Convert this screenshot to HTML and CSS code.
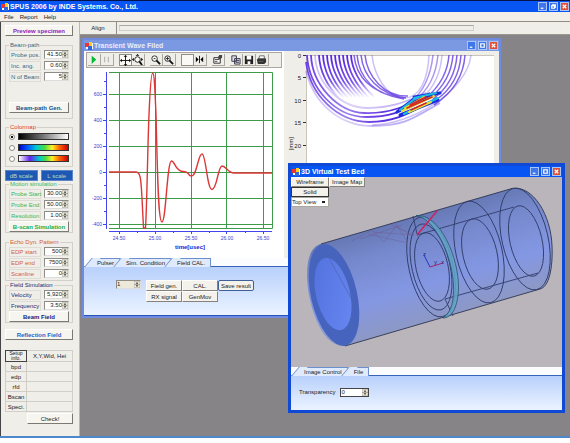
FILE: index.html
```html
<!DOCTYPE html>
<html lang="en">
<head>
<meta charset="utf-8">
<title>SPUS 2006 by INDE Systems. Co., Ltd.</title>
<link rel="stylesheet" href="styles.css">
</head>
<body>
<svg class="defs" aria-hidden="true">
  <symbol id="spin" viewBox="0 0 7 8"><path d="M0 0h7v4H0zM0 4h7v4H0z" fill="#ece9d8" stroke="#aaa69a"/><path d="M2 3h3L3.500 1zM2 5h3L3.500 7z" fill="#333"/></symbol>
  <symbol id="logo" viewBox="0 0 8 8"><path fill="#fff" d="M1 1h7v6H1z"/><path fill="#e33" d="M0 1h4v4H0z"/><path fill="#fc2" d="M4 0h3v4H4z"/><path fill="#36d" d="M3 4h4v4H3z"/></symbol>
</svg>
<header class="titlebar app-title"><svg class="logo"><use href="#logo"/></svg><h1>SPUS 2006 by INDE Systems. Co., Ltd.</h1>
  <div class="caption"><button aria-label="Minimize"><svg viewBox="0 0 8 8"><path d="M2 6h3"/></svg></button><button aria-label="Restore"><svg viewBox="0 0 8 8"><path d="M3 3V2h3v3H5M2 3h3v3H2z"/></svg></button><button class="close" aria-label="Close"><svg viewBox="0 0 8 8"><path d="M2 2l4 4M6 2L2 6"/></svg></button></div>
</header>
<nav class="menu"><button>File</button><button>Report</button><button>Help</button></nav>
<main class="app">
<aside class="side">
  <button class="btn purple wide">Preview specimen</button>
  <fieldset class="g-beam teal"><legend>Beam-path</legend>
    <div class="row"><label for="a1">Probe pos.</label><span class="num"><input id="a1" value="41.50"><svg><use href="#spin"/></svg></span></div>
    <div class="row"><label for="a2">Inc. ang.</label><span class="num"><input id="a2" value="0.60"><svg><use href="#spin"/></svg></span></div>
    <div class="row"><label for="a3">N of Beam</label><span class="num"><input id="a3" value="5"><svg><use href="#spin"/></svg></span></div>
    <button class="btn navy push">Beam-path Gen.</button>
  </fieldset>
  <fieldset class="g-color red"><legend>Colormap</legend>
    <label class="map"><input type="radio" name="map" checked aria-label="Gray"><span class="bar gray"></span></label>
    <label class="map"><input type="radio" name="map" aria-label="Rainbow"><span class="bar rain"></span></label>
    <label class="map"><input type="radio" name="map" aria-label="White rainbow"><span class="bar wrain"></span></label>
  </fieldset>
  <div class="scales"><button>dB scale</button><button>L scale</button></div>
  <fieldset class="green"><legend>Motion simulation</legend>
    <div class="row"><label for="b1">Probe Start</label><span class="num"><input id="b1" value="30.00"><svg><use href="#spin"/></svg></span></div>
    <div class="row"><label for="b2">Probe End</label><span class="num"><input id="b2" value="50.00"><svg><use href="#spin"/></svg></span></div>
    <div class="row"><label for="b3">Resolution</label><span class="num"><input id="b3" value="1.00"><svg><use href="#spin"/></svg></span></div>
    <button class="btn lime">B-scan Simulation</button>
  </fieldset>
  <fieldset class="g-echo orange"><legend>Echo Dyn. Pattern</legend>
    <div class="row"><label for="c1">EDP start</label><span class="num"><input id="c1" value="500"><svg><use href="#spin"/></svg></span></div>
    <div class="row"><label for="c2">EDP end</label><span class="num"><input id="c2" value="7500"><svg><use href="#spin"/></svg></span></div>
    <div class="row"><label for="c3">Scanline</label><span class="num"><input id="c3" value="0"><svg><use href="#spin"/></svg></span></div>
  </fieldset>
  <fieldset class="indigo"><legend>Field Simulation</legend>
    <div class="row"><label for="d1">Velocity</label><span class="num"><input id="d1" value="5,920"><svg><use href="#spin"/></svg></span></div>
    <div class="row"><label for="d2">Frequency</label><span class="num"><input id="d2" value="3.50"><svg><use href="#spin"/></svg></span></div>
    <button class="btn dark">Beam Field</button>
  </fieldset>
  <button class="btn blue reflect">Reflection Field</button>
  <table class="info">
    <tr><th class="setup">Setup<br>info.</th><td>X,Y,Wid, Hei</td></tr>
    <tr><th>bpd</th><td></td></tr><tr><th>edp</th><td></td></tr><tr><th>rfd</th><td></td></tr><tr><th>Bscan</th><td></td></tr><tr><th>Speci.</th><td></td></tr>
  </table>
  <button class="btn check">Check!</button>
</aside>
<section class="work">
  <div class="align"><button>Align</button><span class="slot"></span></div>
  <div class="desk">
    <section class="window wave">
      <header class="titlebar"><svg class="logo"><use href="#logo"/></svg><h2>Transient Wave Filed</h2>
        <div class="caption"><button aria-label="Minimize"><svg viewBox="0 0 8 8"><path d="M2 6h3"/></svg></button><button aria-label="Maximize"><svg viewBox="0 0 8 8"><path d="M2 2h4v4H2z"/></svg></button><button class="close" aria-label="Close"><svg viewBox="0 0 8 8"><path d="M2 2l4 4M6 2L2 6"/></svg></button></div></header>
      <div class="plots">
        <div class="left">
          <div class="tools">
            <button aria-label="Play"><svg viewBox="0 0 12 12"><path d="M4 2l5 4-5 5z" fill="#0b3"/></svg></button>
            <button aria-label="Pause"><svg viewBox="0 0 12 12"><path d="M4 3v6M8 3v6" stroke="#aaa"/></svg></button><i></i>
            <button class="on" aria-label="Move"><svg viewBox="0 0 12 12"><path d="M6 1v10M1 6h10" stroke="#111"/><path d="M6 0l2 2H4zM6 12l2-2H4zM0 6l2-2v4zM12 6l-2-2v4z"/></svg></button>
            <button aria-label="Pan zoom"><svg viewBox="0 0 12 12"><circle cx="6" cy="6" r="3" fill="#fff" stroke="#222"/><path d="M6 0l2 2H4zM0 6l2-2v4zM12 6l-2-2v4z"/><path d="M8 8l3 4" stroke="#111" stroke-width="2"/></svg></button><i></i>
            <button aria-label="Zoom out"><svg viewBox="0 0 12 12"><circle cx="5" cy="5" r="3" fill="#fff" stroke="#222"/><path d="M4 5h2" stroke="#222"/><path d="M7 7l4 4" stroke="#111" stroke-width="2"/></svg></button>
            <button aria-label="Zoom in"><svg viewBox="0 0 12 12"><circle cx="5" cy="5" r="3" fill="#fff" stroke="#222"/><path d="M3 5h4M5 3v4" stroke="#222"/><path d="M7 7l4 4" stroke="#111" stroke-width="2"/></svg></button><i></i>
            <button class="on" aria-label="Blank"></button>
            <button aria-label="Cursors"><svg viewBox="0 0 12 12"><path d="M6 2v8" stroke="#111"/><path d="M5 6L2 3v6zM7 6l3-3v6z"/></svg></button><i></i>
            <button aria-label="Properties"><svg viewBox="0 0 12 12"><path d="M2 4h7v6H2z" fill="#fff" stroke="#222"/><path d="M3 6h5M3 8h3" stroke="#444"/><path d="M6 4l2-3h3v3L8 6z" fill="#444"/></svg></button><i></i>
            <button aria-label="Copy"><svg viewBox="0 0 12 12"><path d="M2 2h5v6H2zM5 5h6v6H5z" fill="#dde" stroke="#334"/><path d="M6 7h4M6 9h4" stroke="#334"/></svg></button>
            <button aria-label="Save"><svg viewBox="0 0 12 12"><path d="M2 2h9v9H2z" fill="#222"/><path d="M4 2h5v4H4zM5 8h3v3H5z" fill="#fff"/></svg></button>
            <button aria-label="Print"><svg viewBox="0 0 12 12"><path d="M1 6l2-2h7l1 2v3l-2 2H2z" fill="#333"/><path d="M4 2h5v3H3zM3 8h5" fill="#fff" stroke="#666"/></svg></button>
          </div>
          <svg class="chart" viewBox="87 68 189 190">
            <path d="M110 72.500H273.500V228.500H110M110 94.500H273M110 120.500H273M110 146.500H273M110 172.500H273M110 198.500H273M110 224.500H273M120.500 72V228M156.500 72V228M192.500 72V228M227.500 72V228M264.500 72V228" fill="none" stroke="#3d9c4c"/>
            <path d="M107.500 72V229M104 94.500h3M104 120.500h3M104 146.500h3M104 172.500h3M104 198.500h3M104 224.500h3M105 81.500h2M105 107.500h2M105 133.500h2M105 159.500h2M105 185.500h2M105 211.500h2M110 231.500H273M120.500 231v3M156.500 231v3M192.500 231v3M227.500 231v3M264.500 231v3M138.500 231v2M174.500 231v2M210.500 231v2M246.500 231v2" fill="none" stroke="#4444ee"/>
            <g class="axis" text-anchor="end"><text x="103" y="96">600</text><text x="103" y="122">400</text><text x="103" y="148">200</text><text x="103" y="174">0</text><text x="103" y="200">-200</text><text x="103" y="226">-400</text></g>
            <g class="axis" text-anchor="middle"><text x="120" y="240">24.50</text><text x="156" y="240">25.00</text><text x="192" y="240">25.50</text><text x="228" y="240">26.00</text><text x="264" y="240">26.50</text><text class="unit" x="191" y="249">time[usec]</text></g>
            <path d="M110 172H137C142 172 142 182 143 198L144.500 228H146.500C148 205 148.500 150 150 115C151 90 152 73 153.700 73S156 90 157 115C158.500 170 159 222 163 222S168 161 172.500 161C176 161 176 171 184 171.500S188 176 192.500 176C198 176 199 154 203 154S208 189.500 213 189.500S219 166 223 166S229 173 235 173H273" fill="none" stroke="#dd3636" stroke-width="1.400"/>
          </svg>
        </div>
        <svg class="field" viewBox="284 52 215 207">
          <defs>
            <linearGradient id="fade" gradientUnits="userSpaceOnUse" x1="0" y1="60" x2="0" y2="99"><stop stop-color="#5b2ae0"/><stop offset=".6" stop-color="#7a55ea"/><stop offset="1" stop-color="#9a7cf0" stop-opacity="0"/></linearGradient>
            <linearGradient id="band" gradientUnits="userSpaceOnUse" x1="306" y1="56" x2="415" y2="115"><stop stop-color="#6a3be2"/><stop offset=".5" stop-color="#9b80f0"/><stop offset=".75" stop-color="#6a3be2"/><stop offset="1" stop-color="#3113e0"/></linearGradient>
            <filter id="soft" x="-20%" y="-20%" width="140%" height="140%"><feGaussianBlur stdDeviation=".6"/></filter>
          </defs>
          <path d="M306 56H494V259H306z" fill="#fff"/>
          <path d="M306 56.500H494M306.500 56V259" fill="none" stroke="#c9c5ba"/>
          <g fill="none" stroke="url(#fade)" stroke-width="1.800">
            <path d="M319 56Q320 80 340 100M323 56Q324 79 344 99M327 56Q328 79 348 99M331 56Q332 78 352 98M335 56Q336 78 356 98M339 56Q340 78 360 98M343 56Q344 77 364 98M347 56Q348 77 368 98M351 56Q352 77 374 98"/></g>
          <g fill="none" stroke="#5930df" stroke-opacity=".75" stroke-width="1.500">
            <path d="M354 56C356 77 370 93 400 99M357 56C359 77 372 95 404 100M361 56C363 77 379 96 406 99M365 56C367 77 384 98 408 97"/>
            <path d="M372 56C374 76 387 99 404 99C420 99 428 80 429 56" stroke-opacity=".3"/>
            <path d="M433 56C431 76 423 94 411 102M438 56C436 76 428 92 414 102" stroke-opacity=".5"/>
            <path d="M442 56Q440 82 424 97" stroke-opacity=".3"/>
            <path d="M449 56Q447 81 427 98M453 56Q451 82 430 99M457 56Q455 84 433 100M461 56Q459 85 436 101M465 56Q463 87 434 106"/>
            <path d="M471 56C467 93 410 126 372 126" stroke-opacity=".3"/></g>
          <g fill="none" stroke="url(#band)" stroke-width="1.800">
            <path d="M306 63C310 96 338 123 369 123S413 111 437 99M307 56C309 90 336 118 366 118S407 109 434 97M311 56C312 86 338 113 364 114S408 107 430 94"/>
            <path d="M306 72C314 105 340 127 372 127S412 120 440 104M315 56C316 84 340 109 368 109S410 100 426 94" stroke-opacity=".35"/></g>
          <g filter="url(#soft)" fill="none" stroke-linecap="round">
            <path d="M397 113L414 100M400 116L438 101M414 98L440 94M398 112L436 95" stroke="#1d2be0" stroke-width="3"/>
            <path d="M400 111L416 99M404 115L438 99M414 99L436 94" stroke="#18bfe0" stroke-width="2"/>
            <path d="M402 112L434 97M405 109L424 98M409 113L431 103" stroke="#e4e233" stroke-width="2"/>
            <path d="M407 109L432 98M410 106L426 98M411 111L426 104" stroke="#d9271a" stroke-width="1.600"/></g>
          <path d="M303 56.500h3M303 78.500h3M303 101.500h3M303 123.500h3M303 146.500h3" stroke="#333"/>
          <g class="depth" text-anchor="end"><text x="301" y="59">0</text><text x="301" y="81">5</text><text x="301" y="104">10</text><text x="301" y="126">15</text><text x="301" y="149">20</text><text transform="translate(293 138) rotate(-90)">[mm]</text></g>
        </svg>
      </div>
      <div class="tabs"><button>Pulser</button><button>Sim. Condition</button><button class="sel">Field CAL.</button></div>
      <div class="panel field-panel"><label class="num grayed"><input aria-label="Field index" value="1"><svg><use href="#spin"/></svg></label>
        <div class="cmds"><button>Field gen.</button><button>CAL.</button><button class="default">Save result</button><button>RX signal</button><button>GenMov</button></div></div>
    </section>
    <section class="window bed">
      <header class="titlebar"><svg class="logo"><use href="#logo"/></svg><h2>3D Virtual Test Bed</h2>
        <div class="caption"><button aria-label="Minimize"><svg viewBox="0 0 8 8"><path d="M2 6h3"/></svg></button><button aria-label="Maximize"><svg viewBox="0 0 8 8"><path d="M2 2h4v4H2z"/></svg></button><button class="close" aria-label="Close"><svg viewBox="0 0 8 8"><path d="M2 2l4 4M6 2L2 6"/></svg></button></div></header>
      <div class="scene">
        <svg viewBox="291 177 271 190">
          <defs>
            <linearGradient id="skin" gradientUnits="userSpaceOnUse" x1="415" y1="216" x2="445" y2="318"><stop stop-color="#6678b4"/><stop offset=".25" stop-color="#7689cd"/><stop offset=".65" stop-color="#8497e3"/><stop offset="1" stop-color="#8d98c4"/></linearGradient>
            <linearGradient id="bore" x1="0" y1="0" x2="1" y2="1"><stop stop-color="#5070dc"/><stop offset="1" stop-color="#6a88f2"/></linearGradient>
          </defs>
          <path d="M321 244L512 188.500C533 185 551 215 552 246C553 268 549 287 540 289L345 346C320 348 307 300 307 275C307 257 312 246 321 244z" fill="url(#skin)"/>
          <path d="M321 244L512 188.500C533 185 551 215 552 246C553 268 549 287 540 289L345 346" fill="none" stroke="#38405c"/>
          <ellipse cx="334" cy="295" rx="23" ry="52" transform="rotate(-13 334 295)" fill="#4664bd"/>
          <ellipse cx="333" cy="294" rx="17" ry="37" transform="rotate(-13 333 294)" fill="url(#bore)"/>
          <path d="M321 244L355 305M345 329L359 325" stroke="#5064a8" stroke-width=".7"/>
          <g fill="none" stroke="#313d6c" stroke-width=".9">
            <ellipse cx="525" cy="239" rx="23" ry="52" transform="rotate(-13 525 239)"/>
            <ellipse cx="526" cy="241" rx="16" ry="36" transform="rotate(-13 526 241)"/>
            <ellipse cx="479" cy="252" rx="23" ry="52" transform="rotate(-13 479 252)"/>
            <ellipse cx="480" cy="254" rx="17" ry="36" transform="rotate(-13 480 254)"/>
            <ellipse cx="431" cy="267" rx="22" ry="51" transform="rotate(-13 431 267)"/>
            <ellipse cx="431" cy="267" rx="19" ry="44" transform="rotate(-13 431 267)"/>
            <ellipse cx="432" cy="267" rx="16" ry="35" transform="rotate(-13 432 267)"/>
            <path d="M417 235L514 207M445 299L538 273M445 299L453 316M417 234L413 216"/></g>
          <path d="M416 215.500C440 213 459 258 458.500 288C458 307 452 318 443 318C452 312 454 299 453.500 285C452 254 434 218 416 215.500z" fill="#62a4c6" fill-opacity=".85" stroke="#2c5270" stroke-width=".8"/>
          <path d="M352 241L372 230L384 242L396 226L412 236M360 239L402 225M372 232L414 235L390 224M368 234L408 243L396 224" fill="none" stroke="#705893" stroke-width=".6" stroke-opacity=".7"/>
          <path d="M417 235L437 211" stroke="#cd2260" stroke-width="1.600"/>
          <path d="M424 255L430 267" stroke="#2334cc"/><path d="M430 267L443 263" stroke="#a02867"/>
          <g class="xyz"><text x="423" y="256">z</text><text x="434" y="264">y</text><text x="441" y="264">x</text></g>
        </svg>
        <div class="views"><button>Wireframe</button><button>Image Map</button><button class="pressed">Solid</button>
          <select aria-label="View"><option>Top View</option></select></div>
      </div>
      <div class="tabs"><button class="sel">Image Control</button><button>File</button></div>
      <div class="panel bed-panel"><label for="tr">Transparency</label><span class="num"><input id="tr" value="0"><svg><use href="#spin"/></svg></span></div>
    </section>
  </div>
</section>
</main>
<footer></footer>
</body>
</html>
```
FILE: styles.css
```css
* { box-sizing: border-box; }
body { margin: 0; min-height: 100vh; display: flex; flex-direction: column; background: #fff; font: 6px/8px "Liberation Sans", Arial, sans-serif; color: #222; }
button, input, select { font: inherit; color: inherit; margin: 0; padding: 0; border: 0; background: none; border-radius: 0; min-width: 0; }
button { white-space: nowrap; }
h1, h2 { margin: 0; font: bold 7px/9px "Liberation Sans", Arial, sans-serif; white-space: nowrap; }
.defs { position: absolute; width: 0; height: 0; }
.logo { width: 8px; height: 8px; }

.titlebar { display: flex; align-items: center; gap: 1px; height: 11px; padding: 0 1px; color: #fff; background: #0755f2; }
.app-title { height: 12px; border-top: 1px solid #04144a; }
.caption { display: flex; gap: 2px; margin-left: auto; }
.caption button { width: 9px; height: 9px; background: #3f76ea; border: 1px solid #a9c4fa; display: flex; }
.caption svg { width: 100%; fill: none; stroke: #fff; stroke-width: 1.4; }
.caption .close { background: #df5034; }
.menu { display: flex; gap: 6px; height: 10px; padding: 0 4px; background: #f1efe8; border-bottom: 1px solid #8f8d86; }

.app { flex: 1; display: flex; background: #f0eee8; border-left: 1px solid #444; }
.side { width: 79px; padding: 3px 6px 0 4px; display: flex; flex-direction: column; border-right: 1px solid #bbb8ae; }
.btn { display: block; height: 11px; background: #f6f5f0; border: 1px solid #fff; border-right-color: #7b7972; border-bottom-color: #7b7972; font-weight: bold; text-align: center; }
.purple { color: #9020b8; }
.navy { color: #175182; }
.lime { color: #22ae3a; }
.dark { color: #171a80; }
.blue { color: #2463ca; }
fieldset { margin: 0; padding: 0 3px; min-width: 0; border: 1px solid #d2d0c8; }
legend { margin-left: 0; padding: 0 1px; line-height: 8px; }
.row { display: flex; justify-content: space-between; height: 11px; align-items: center; }
.row label { width: 32px; height: 10px; padding-left: 1px; border: 1px solid #dedcd4; white-space: nowrap; }
.num { display: flex; width: 25px; height: 9px; background: #fff; border: 1px solid #8e8c86; border-right-color: #ddd; border-bottom-color: #ddd; color: #222; }
.num input { flex: 1; width: 0; text-align: right; line-height: 7px; }
.num svg { width: 6px; height: 7px; }
fieldset .btn { width: 100%; }
.g-beam { margin-top: 5px; }
.g-beam .push { margin: 20px 0 5px; }
.teal { color: #316a86; }
.g-color { margin-top: 4px; padding: 0 3px 2px; }
.red { color: #e23b2c; }
.map { display: flex; align-items: center; gap: 3px; height: 11px; }
.map input { appearance: none; width: 6px; height: 6px; border: 1px solid #8e8c86; border-radius: 50%; background: #fff; }
.map input:checked { background: radial-gradient(#111 35%, #fff 45%); }
.bar { flex: 1; height: 7px; border: 1px solid #333; }
.gray { background: linear-gradient(90deg, #000, #777 50%, #fff); }
.rain { background: linear-gradient(90deg, #00c, #06f 20%, #0cc 36%, #4d4 52%, #fe2 68%, #f60 82%, #c00); }
.wrain { background: linear-gradient(90deg, #fff, #62e 22%, #0cc 42%, #4d4 54%, #fe2 68%, #f60 82%, #c00); }
.scales { display: grid; grid-template-columns: 1fr 1fr; gap: 3px; margin: 3px 0 -1px; }
.scales button { height: 11px; background: #1c58b4; border: 1px solid #5c86c8; color: #b9d8c0; }
.green { color: #36b554; }
.orange { color: #d0603a; }
.g-echo { margin-top: 5px; padding-bottom: 1px; }
.indigo { color: #26286e; }
.reflect { margin-top: 6px; }
.info { margin-top: 10px; border-collapse: collapse; width: 100%; }
.info th, .info td { padding: 0; height: 10px; border: 1px solid #d0cec6; font-weight: normal; text-align: center; line-height: 8px; }
.info th { width: 21px; }
.info .setup { font-size: 5px; line-height: 5px; border: 1px solid #444; }
.check { width: 46px; margin: 1px 0 5px auto; font-weight: normal; }

.work { flex: 1; display: flex; flex-direction: column; min-width: 0; }
.align { display: flex; height: 13px; border-bottom: 1px solid #9a978f; }
.align button { width: 37px; border-right: 1px solid #8f8d86; }
.slot { flex: 1; margin: 3px 96px 3px 2px; border: 1px solid #d0cec6; border-top-color: #aaa79e; }
.desk { flex: 1; position: relative; background: #878487; }

.window { position: absolute; display: flex; flex-direction: column; }
.wave { left: 2px; top: 3px; width: 419px; border: 2px solid #6f8be0; background: #f0eee8; }
.wave .titlebar { background: #7b98e2; }
.wave h2 { color: #e6eefc; }
.plots { display: flex; }
.left { width: 200px; padding: 1px 2px 0; background: #fff; }
.tools { display: flex; height: 16px; background: #f0eee8; border: 1px solid #aaa79e; padding: 1px; }
.tools button { width: 13px; height: 12px; border-right: 1px solid #aaa79e; border-bottom: 1px solid #aaa79e; }
.tools .on { background: #faf9f6; border: 1px solid #8f8d86; }
.tools i { width: 5px; }
.tools svg { display: block; width: 11px; height: 11px; }
.chart { display: block; width: 189px; }
.field { flex: 1; min-width: 0; }
.axis { font-size: 5px; fill: #3c3cd0; }
.unit { font-weight: bold; font-size: 6px; fill: #1818d8; }
.depth { font-size: 6px; fill: #222; }

.tabs { display: flex; height: 9px; padding-left: 8px; background: #fbfcff; border-bottom: 1px solid #3564b8; }
.tabs button { position: relative; z-index: 0; height: 9px; margin-right: 1px; padding: 0 5px; border: 1px solid #6c8fd0; border-left: 0; border-bottom: 0; background: #dfeafc; line-height: 8px; }
.tabs button::before { content: ""; position: absolute; left: -4px; top: -1px; width: 8px; height: 9px; border-left: 1px solid #6c8fd0; background: #dfeafc; transform: skewX(-40deg); z-index: -1; }
.panel { display: flex; background: linear-gradient(#b8d0fb, #dce9ff 70%, #eaf3ff); }
.field-panel { height: 49px; padding: 13px 0 0 32px; gap: 5px; border-bottom: 1px solid #2a50b8; }
.grayed { background: #ece9d8; }
.grayed input { text-align: left; }
.cmds { display: grid; grid-template-columns: repeat(3, 36px); grid-auto-rows: 11px; align-content: start; }
.cmds button, .views button { background: #f4f2ea; border: 1px solid #fff; border-right-color: #85837c; border-bottom-color: #85837c; }
.cmds .default { border: 1px solid #40609c; border-radius: 2px; }

.bed { left: 208px; top: 128px; width: 277px; border: 3px solid #0f49d6; }
.scene { position: relative; background: #b9b5bb; }
.scene > svg { display: block; width: 100%; }
.xyz { font-size: 6px; fill: #222c80; }
.views { position: absolute; left: 0; top: 0; display: grid; grid-template-columns: 38px 36px; grid-auto-rows: 10px; }
.views .pressed { grid-column: 1; border: 1px solid #333; }
.views select { grid-column: 1; appearance: none; border: 1px solid #aaa79e; background: #fff linear-gradient(#222, #222) no-repeat right 3px center / 3px 2px; }
.bed-panel { height: 34px; padding: 12px 8px; gap: 5px; }
.bed-panel .num { width: 29px; border-color: #444; }
.bed-panel input { text-align: left; }
footer { height: 7px; border-top: 2px solid #4e88cc; background: #fff; }
```
